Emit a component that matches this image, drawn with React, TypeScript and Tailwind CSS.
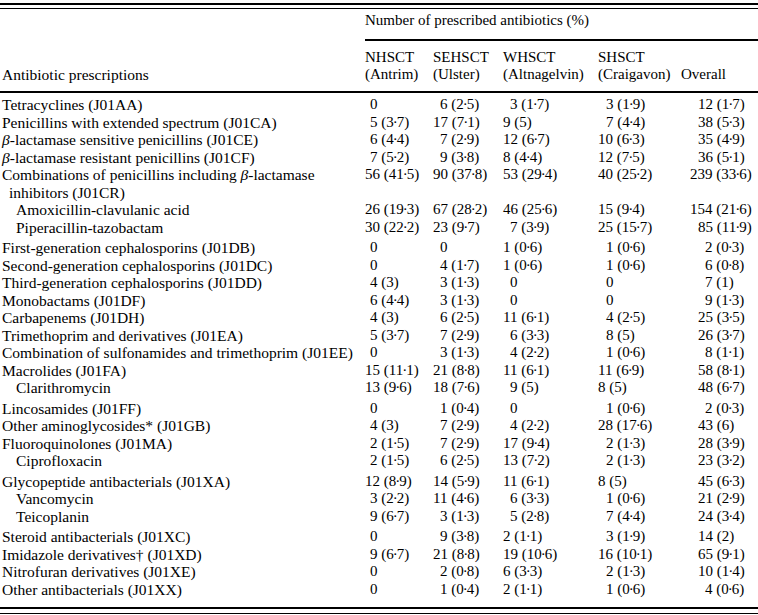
import type { ReactNode } from 'react'

// '!' prefix marks a single-digit count that is not indented in the source table
interface Row {
  label: ReactNode
  cont?: ReactNode
  sub?: boolean
  gap?: boolean
  cells: string[]
}

const beta = <i>β</i>

const ROWS: Row[] = [
  { label: 'Tetracyclines (J01AA)', cells: ['0', '6 (2·5)', '3 (1·7)', '3 (1·9)', '12 (1·7)'] },
  { label: 'Penicillins with extended spectrum (J01CA)', cells: ['5 (3·7)', '17 (7·1)', '!9 (5)', '7 (4·4)', '38 (5·3)'] },
  { label: <>{beta}-lactamase sensitive penicillins (J01CE)</>, cells: ['6 (4·4)', '7 (2·9)', '12 (6·7)', '10 (6·3)', '35 (4·9)'] },
  { label: <>{beta}-lactamase resistant penicillins (J01CF)</>, cells: ['7 (5·2)', '9 (3·8)', '!8 (4·4)', '12 (7·5)', '36 (5·1)'] },
  {
    label: <>Combinations of penicillins including {beta}-lactamase</>,
    cont: 'inhibitors (J01CR)',
    cells: ['56 (41·5)', '90 (37·8)', '53 (29·4)', '40 (25·2)', '239 (33·6)'],
  },
  { label: 'Amoxicillin-clavulanic acid', sub: true, cells: ['26 (19·3)', '67 (28·2)', '46 (25·6)', '15 (9·4)', '154 (21·6)'] },
  { label: 'Piperacillin-tazobactam', sub: true, gap: true, cells: ['30 (22·2)', '23 (9·7)', '7 (3·9)', '25 (15·7)', '85 (11·9)'] },
  { label: 'First-generation cephalosporins (J01DB)', cells: ['0', '0', '!1 (0·6)', '1 (0·6)', '2 (0·3)'] },
  { label: 'Second-generation cephalosporins (J01DC)', cells: ['0', '4 (1·7)', '!1 (0·6)', '1 (0·6)', '6 (0·8)'] },
  { label: 'Third-generation cephalosporins (J01DD)', cells: ['4 (3)', '3 (1·3)', '0', '0', '7 (1)'] },
  { label: 'Monobactams (J01DF)', cells: ['6 (4·4)', '3 (1·3)', '0', '0', '9 (1·3)'] },
  { label: 'Carbapenems (J01DH)', cells: ['4 (3)', '6 (2·5)', '11 (6·1)', '4 (2·5)', '25 (3·5)'] },
  { label: 'Trimethoprim and derivatives (J01EA)', cells: ['5 (3·7)', '7 (2·9)', '6 (3·3)', '8 (5)', '26 (3·7)'] },
  { label: 'Combination of sulfonamides and trimethoprim (J01EE)', cells: ['0', '3 (1·3)', '4 (2·2)', '1 (0·6)', '8 (1·1)'] },
  { label: 'Macrolides (J01FA)', cells: ['15 (11·1)', '21 (8·8)', '11 (6·1)', '11 (6·9)', '58 (8·1)'] },
  { label: 'Clarithromycin', sub: true, gap: true, cells: ['13 (9·6)', '18 (7·6)', '9 (5)', '!8 (5)', '48 (6·7)'] },
  { label: 'Lincosamides (J01FF)', cells: ['0', '1 (0·4)', '0', '1 (0·6)', '2 (0·3)'] },
  { label: 'Other aminoglycosides* (J01GB)', cells: ['4 (3)', '7 (2·9)', '4 (2·2)', '28 (17·6)', '43 (6)'] },
  { label: 'Fluoroquinolones (J01MA)', cells: ['2 (1·5)', '7 (2·9)', '17 (9·4)', '2 (1·3)', '28 (3·9)'] },
  { label: 'Ciprofloxacin', sub: true, gap: true, cells: ['2 (1·5)', '6 (2·5)', '13 (7·2)', '2 (1·3)', '23 (3·2)'] },
  { label: 'Glycopeptide antibacterials (J01XA)', cells: ['12 (8·9)', '14 (5·9)', '11 (6·1)', '!8 (5)', '45 (6·3)'] },
  { label: 'Vancomycin', sub: true, cells: ['3 (2·2)', '11 (4·6)', '6 (3·3)', '1 (0·6)', '21 (2·9)'] },
  { label: 'Teicoplanin', sub: true, gap: true, cells: ['9 (6·7)', '3 (1·3)', '5 (2·8)', '7 (4·4)', '24 (3·4)'] },
  { label: 'Steroid antibacterials (J01XC)', cells: ['0', '9 (3·8)', '!2 (1·1)', '3 (1·9)', '14 (2)'] },
  { label: 'Imidazole derivatives† (J01XD)', cells: ['9 (6·7)', '21 (8·8)', '19 (10·6)', '16 (10·1)', '65 (9·1)'] },
  { label: 'Nitrofuran derivatives (J01XE)', cells: ['0', '2 (0·8)', '!6 (3·3)', '2 (1·3)', '10 (1·4)'] },
  { label: 'Other antibacterials (J01XX)', cells: ['0', '1 (0·4)', '!2 (1·1)', '1 (0·6)', '4 (0·6)'] },
]

// indent for a one-digit count, per column (overall column also has 3-digit values)
const ONE_DIGIT = ['pl-[5px]', 'pl-[7px]', 'pl-[7px]', 'pl-[8px]', 'pl-[15px]']
const TWO_DIGIT_OVERALL = 'pl-[8px]'

const GRID = 'grid grid-cols-[365px_68px_70px_95px_83px_1fr]'

// decimal point is a raised dot set tight against its digits
function Num({ text }: { text: string }) {
  const parts = text.split('·')
  return (
    <>
      {parts.map((p, i) => (
        <span key={i}>
          {i > 0 && <span className="-mx-[1px]">·</span>}
          {p}
        </span>
      ))}
    </>
  )
}

function Value({ raw, col }: { raw: string; col: number }) {
  const flush = raw.startsWith('!')
  const text = flush ? raw.slice(1) : raw
  const digits = text.split(' ')[0].length
  let pad = ''
  if (col === 4) {
    pad = digits === 1 ? ONE_DIGIT[4] : digits === 2 ? TWO_DIGIT_OVERALL : ''
  } else if (digits === 1 && !flush) {
    pad = ONE_DIGIT[col]
  }
  return (
    <div className={`${col === 4 ? 'ml-[9px] ' : ''}whitespace-nowrap text-[15px] ${pad}`}>
      <Num text={text} />
    </div>
  )
}

export default function App() {
  return (
    <div
      className="h-[615px] w-[758px] overflow-hidden bg-white text-[15px] leading-[17.5px] text-black"
      style={{ fontFamily: '"Liberation Serif", "Times New Roman", serif' }}
    >
      <div className="pt-[3px]">
        <div className="h-[2px] bg-black" />
        <div className="mt-[3px] h-px bg-black" />
      </div>

      {/* header */}
      <div className={`${GRID} pt-[3px] leading-[17px]`}>
        <div />
        <div className="col-span-5 pb-[10px]">Number of prescribed antibiotics (%)</div>
        <div />
        <div className="col-span-5 h-[2px] bg-black" />
        <div className="self-end pl-[2px] pb-[8px] text-[15.5px]">Antibiotic prescriptions</div>
        <div className="pt-[8px] pb-[8px]">
          NHSCT
          <br />
          (Antrim)
        </div>
        <div className="pt-[8px] pb-[8px]">
          SEHSCT
          <br />
          (Ulster)
        </div>
        <div className="pt-[8px] pb-[8px]">
          WHSCT
          <br />
          (Altnagelvin)
        </div>
        <div className="pt-[8px] pb-[8px]">
          SHSCT
          <br />
          (Craigavon)
        </div>
        <div className="self-end pb-[8px]">Overall</div>
      </div>
      <div className="h-[2px] bg-black" />

      {/* body */}
      <div className="pt-[3px] pb-[9px]">
        {ROWS.map((r, i) => (
          <div key={i} className={`${GRID} ${r.gap ? 'pb-[3px]' : ''}`}>
            <div className={`text-[15.5px] ${r.sub ? 'pl-[16px]' : 'pl-[2px]'}`}>
              <div className="whitespace-nowrap">{r.label}</div>
              {r.cont && <div className="pl-[7px]">{r.cont}</div>}
            </div>
            {r.cells.map((c, j) => (
              <Value key={j} raw={c} col={j} />
            ))}
          </div>
        ))}
      </div>

      <div className="h-[2px] bg-black" />
      <div className="mt-[4px] h-px bg-black" />
    </div>
  )
}
